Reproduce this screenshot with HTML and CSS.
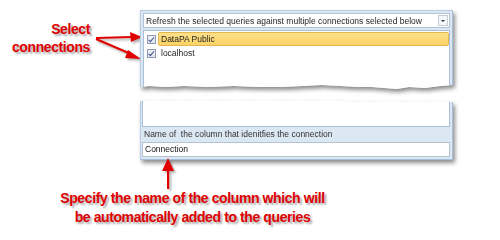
FILE: index.html
```html
<!DOCTYPE html>
<html lang="en">

<head>
    <meta charset="UTF-8">
    <title>Connection selection</title>
    <link rel="stylesheet" href="styles.css">
</head>

<body>
    <div class="stage">
        <div class="callout callout-select">Select<br>connections</div>
        <svg class="callout-arrows" width="150" height="70" viewBox="0 0 150 70">
            <g stroke="#e00000" stroke-width="2.2" fill="#e00000">
                <line x1="96" y1="38" x2="132" y2="37" />
                <polygon points="142,37 130,32 131,42" stroke="none" />
                <line x1="96" y1="39" x2="131" y2="54" />
                <polygon points="141,59 128,50 125,58" stroke="none" />
            </g>
        </svg>

        <div class="panels">
            <div class="shadow">
                <div class="panel panel-top">
                    <div class="combo">
                        <span>Refresh the selected queries against multiple connections selected below</span>
                        <div class="combo-btn"></div>
                    </div>
                    <div class="list">
                        <div class="row">
                            <span class="check"></span>
                            <span class="item selected">DataPA Public</span>
                        </div>
                        <div class="row">
                            <span class="check"></span>
                            <span class="item">localhost</span>
                        </div>
                    </div>
                </div>
            </div>
            <div class="shadow">
                <div class="panel panel-bottom">
                    <div class="list-end"></div>
                    <div class="field-label">Name of &nbsp;the column that idenitfies the connection</div>
                    <div class="field">Connection</div>
                </div>
            </div>
        </div>

        <div class="note">
            <svg class="note-arrow" width="14" height="31" viewBox="0 0 14 31">
                <polygon points="7,0 1,13 13,13" fill="#e00000" />
                <rect x="6" y="12" width="2.2" height="19" fill="#e00000" />
            </svg>
            <div class="callout callout-note">Specify the name of the column which will<br>be automatically added to the queries</div>
        </div>
    </div>
</body>

</html>
```

FILE: styles.css
```css
* {
    margin: 0;
    padding: 0;
    box-sizing: border-box;
}

body {
    background: white;
    font-family: "Liberation Sans", Arial, sans-serif;
}

.stage {
    position: relative;
    width: 500px;
    height: 240px;
    overflow: hidden;
}

/* red annotations */
.callout {
    color: #e00000;
    font-weight: bold;
    font-size: 14px;
    letter-spacing: -0.4px;
    text-shadow: 2px 2px 2px rgba(0, 0, 0, 0.35);
}

.callout-select {
    position: absolute;
    left: 0;
    top: 20px;
    width: 90px;
    text-align: right;
    line-height: 18px;
}

.callout-arrows {
    position: absolute;
    left: 0;
    top: 0;
    filter: drop-shadow(2px 2px 1px rgba(0, 0, 0, 0.3));
}

/* panels */
.panels {
    margin-left: 140px;
    width: 313px;
    padding-top: 10px;
    display: flex;
    flex-direction: column;
    gap: 8px;
}

.shadow {
    filter: drop-shadow(2px 3px 2px rgba(0, 0, 0, 0.45));
}

.panel {
    background: #dce7f4;
    border-left: 1px solid #b8cce4;
    border-right: 1px solid #a9bed9;
    font-size: 8.5px;
    color: #1e1e1e;
}

.panel-top {
    height: 82px;
    padding: 2px 2px 0 2px;
    border-top: 1px solid #b8cce4;
    display: flex;
    flex-direction: column;
    gap: 2px;
    clip-path: polygon(0 0, 100% 0, 100% 75px, 96% 76px, 91% 78px, 86% 77px, 82% 79px, 78% 78px, 74% 77px, 70% 77px, 64% 76px, 58% 75px, 52% 76px, 45% 77px, 38% 77px, 30% 76px, 22% 77px, 14% 76px, 8% 77px, 3% 76px, 0 77px);
}

.combo {
    height: 15px;
    background: white;
    border: 1px solid #b6c2d1;
    display: flex;
    align-items: center;
    justify-content: space-between;
    padding: 0 1px 0 2px;
}

.combo-btn {
    width: 10px;
    height: 11px;
    border: 1px solid #c4ccd6;
    background: #f4f6f9;
    position: relative;
}

.combo-btn::after {
    content: "";
    position: absolute;
    left: 2px;
    top: 4px;
    border-left: 2px solid transparent;
    border-right: 2px solid transparent;
    border-top: 2px solid #333;
}

.list {
    flex: 1;
    background: white;
    border: 1px solid #a9bed9;
    border-bottom: none;
    padding-top: 1px;
}

.row {
    height: 14px;
    display: flex;
    align-items: center;
    gap: 2px;
    padding-left: 3px;
}

.check {
    width: 9px;
    height: 9px;
    border: 1px solid #8e9bb0;
    background: linear-gradient(#f0f2f6, #dfe4ec);
    position: relative;
}

.check::after {
    content: "";
    position: absolute;
    left: 2px;
    top: 0;
    width: 2px;
    height: 4.5px;
    border-right: 1.3px solid #3d4f8a;
    border-bottom: 1.3px solid #3d4f8a;
    transform: rotate(40deg);
}

.item {
    flex: 1;
    height: 14px;
    line-height: 12px;
    padding-left: 2px;
    border: 1px solid transparent;
}

.item.selected {
    background: linear-gradient(#fde08a, #fbd365);
    border-color: #e6b64e;
    border-radius: 2px;
}

.panel-bottom {
    height: 60px;
    padding: 0 2px 2px 1px;
    border-bottom: 1px solid #a9bed9;
    display: flex;
    flex-direction: column;
    clip-path: polygon(0 1px, 5% 0, 12% 1px, 20% 0, 30% 1px, 40% 0, 50% 1px, 60% 0, 70% 2px, 80% 1px, 88% 2px, 96% 1px, 100% 2px, 100% 100%, 0 100%);
}

.list-end {
    height: 27px;
    background: white;
    border: 1px solid #a9bed9;
    border-top: none;
}

.field-label {
    height: 15px;
    line-height: 15px;
    padding-left: 2px;
    color: #333;
}

.field {
    height: 15px;
    line-height: 13px;
    background: white;
    border: 1px solid #b6c2d1;
    padding-left: 2px;
    color: #111;
}

/* bottom note */
.note-arrow {
    display: block;
    margin-top: -2px;
    margin-left: 161px;
    filter: drop-shadow(2px 2px 1px rgba(0, 0, 0, 0.3));
}

.callout-note {
    width: 385px;
    text-align: center;
    line-height: 19px;
}
```
